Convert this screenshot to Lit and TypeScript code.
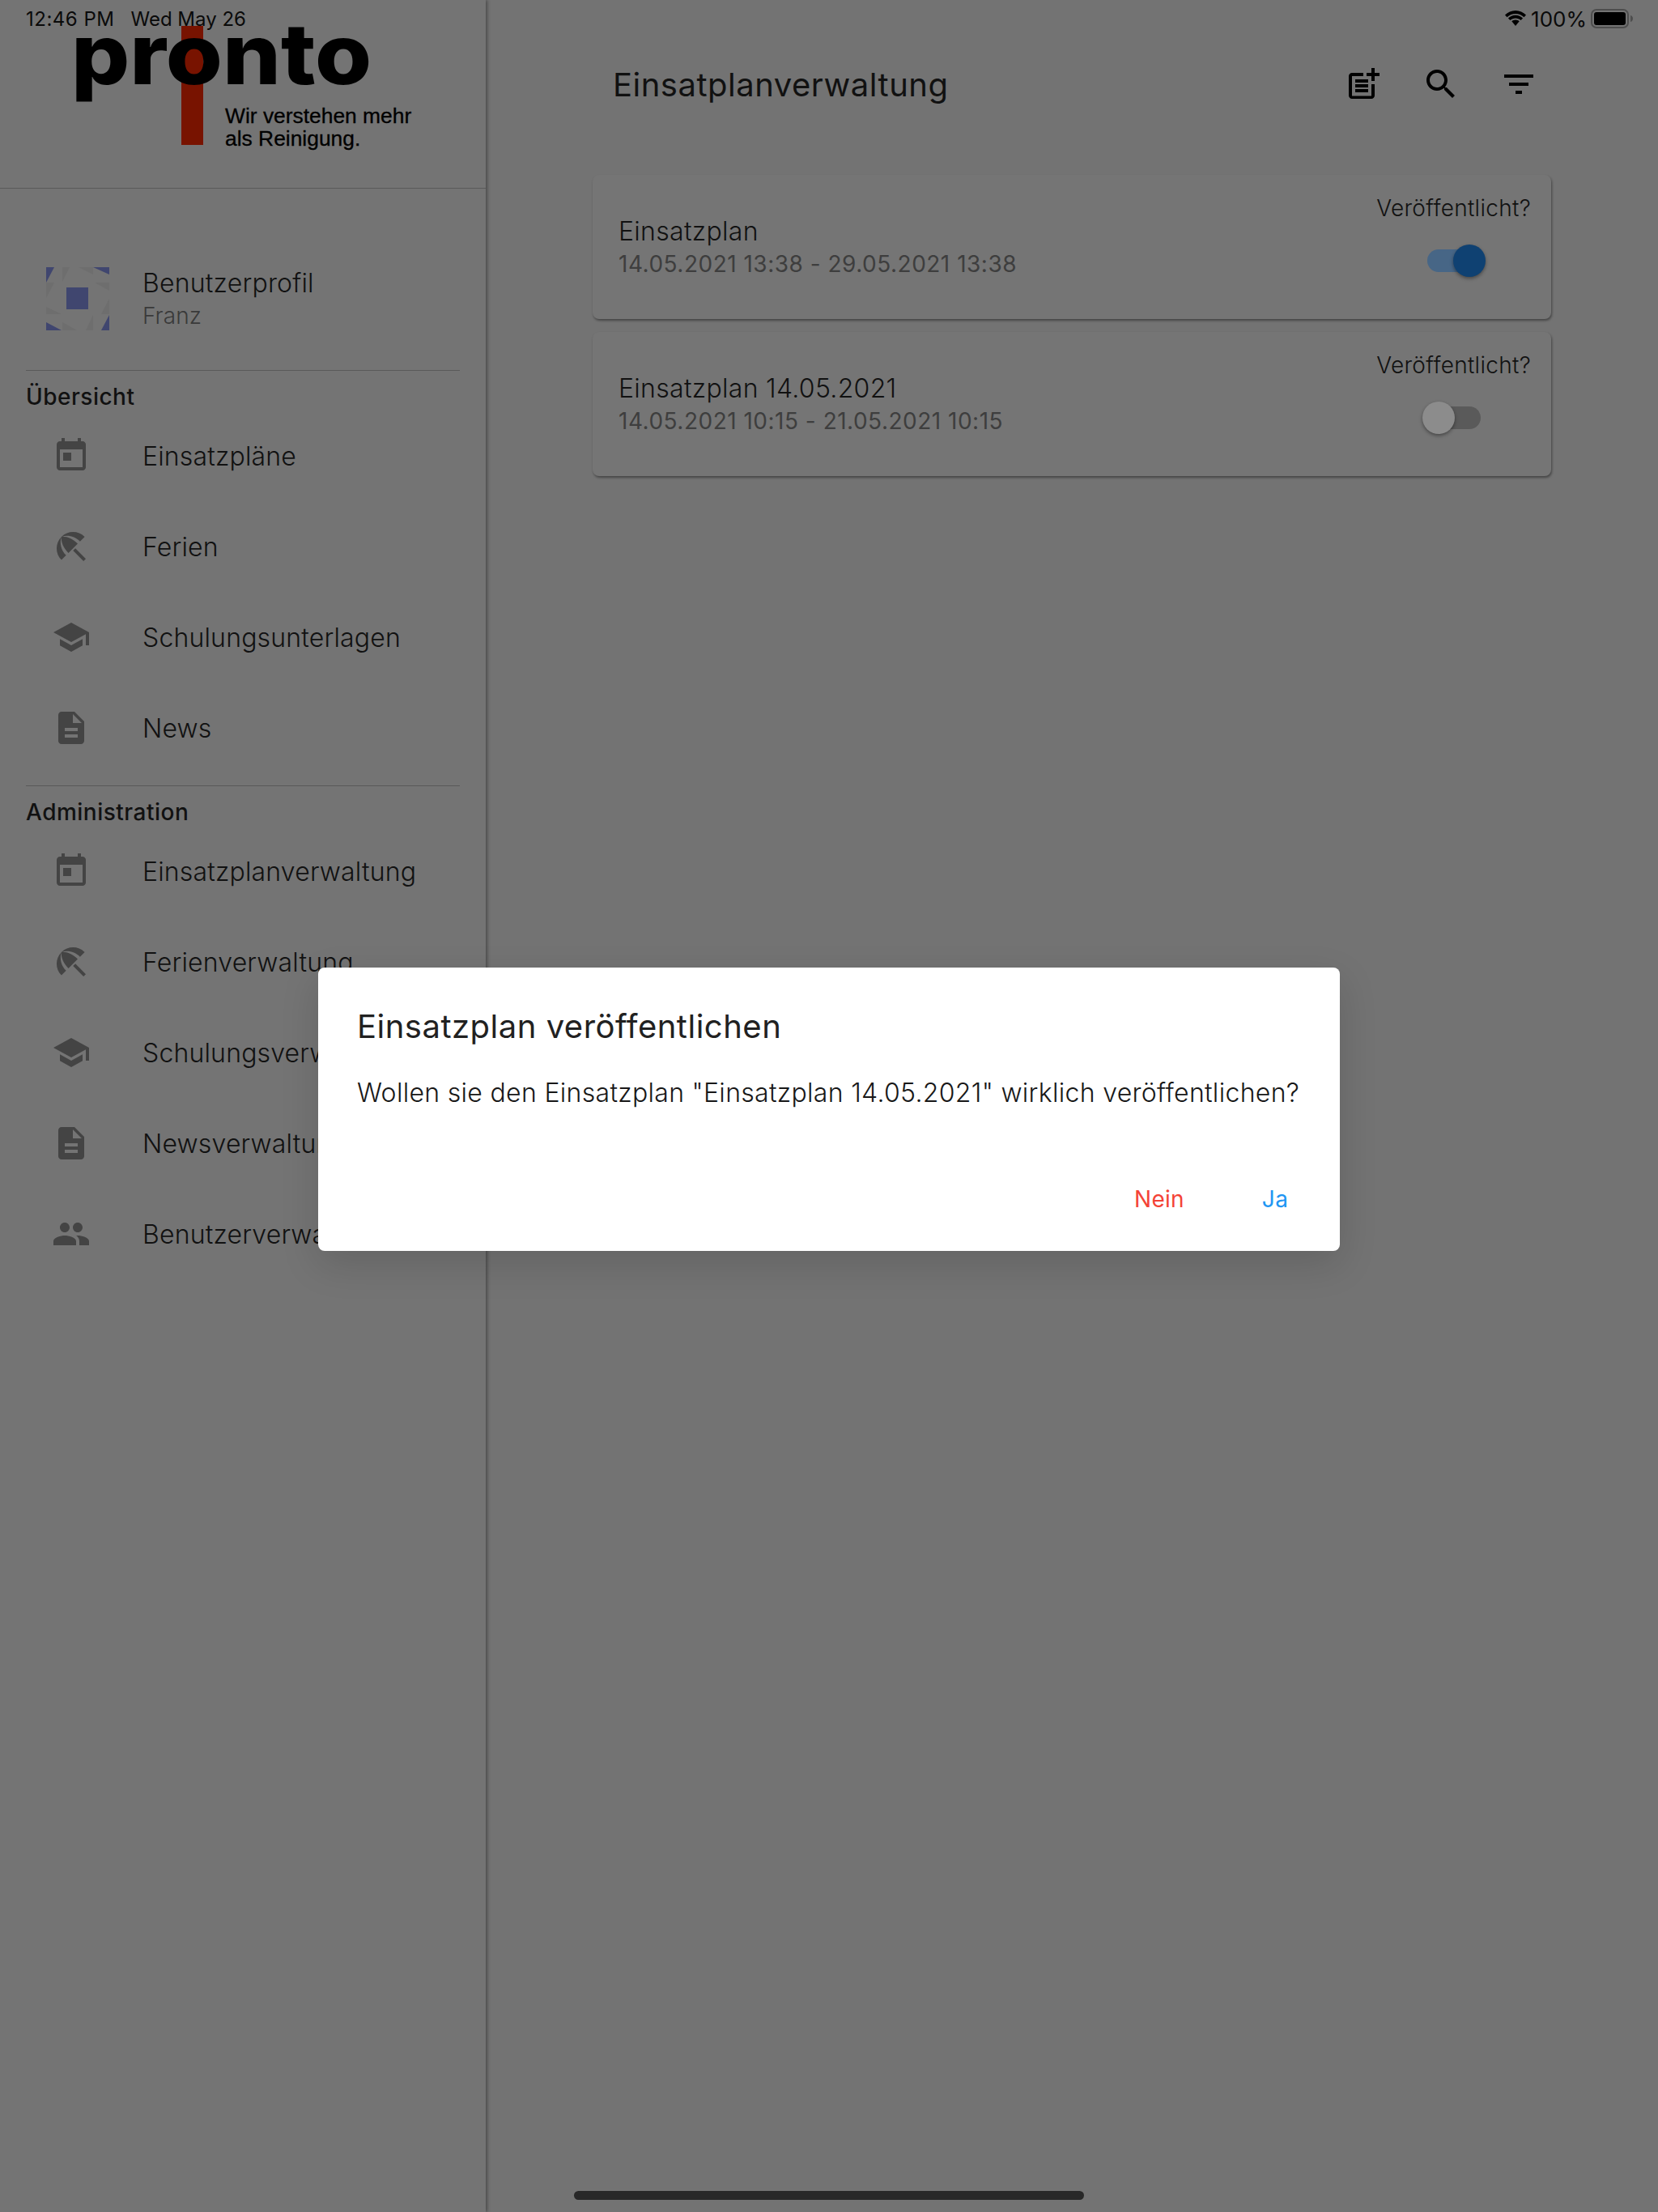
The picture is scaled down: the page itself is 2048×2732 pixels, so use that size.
import { LitElement, html, svg, css } from "lit";
import { customElement } from "lit/decorators.js";

const ICONS: Record<string, string> = {
  today:
    "M19 3h-1V1h-2v2H8V1H6v2H5c-1.11 0-1.99.9-1.99 2L3 19c0 1.1.89 2 2 2h14c1.1 0 2-.9 2-2V5c0-1.1-.9-2-2-2zm0 16H5V8h14v11zM7 10h5v5H7z",
  beach:
    "M13.127 14.56l1.43-1.43 6.44 6.443L19.57 21zm4.293-5.73l2.86-2.86c-3.95-3.95-10.35-3.96-14.3-.02 3.93-1.3 8.31-.25 11.44 2.88zM5.95 5.98c-3.94 3.95-3.93 10.35.02 14.3l2.86-2.86C5.7 14.29 4.65 9.91 5.95 5.98zm.02-.02l-.01.01c-.38 3.01 1.17 6.88 4.3 10.02l5.73-5.73c-3.13-3.13-7.01-4.68-10.02-4.3z",
  school: "M5 13.18v4L12 21l7-3.82v-4L12 17l-7-3.82zM12 3L1 9l11 6 9-4.91V17h2V9L12 3z",
  doc: "M14 2H6c-1.1 0-1.99.9-1.99 2L4 20c0 1.1.89 2 2 2h12c1.1 0 2-.9 2-2V8l-6-6zm2 16H8v-2h8v2zm0-4H8v-2h8v2zm-3-5V3.5L18.5 9H13z",
  people:
    "M16 11c1.66 0 2.99-1.34 2.99-3S17.66 5 16 5c-1.66 0-3 1.34-3 3s1.34 3 3 3zm-8 0c1.66 0 2.99-1.34 2.99-3S9.66 5 8 5C6.34 5 5 6.34 5 8s1.34 3 3 3zm0 2c-2.33 0-7 1.17-7 3.5V19h14v-2.5c0-2.33-4.67-3.5-7-3.5zm8 0c-.29 0-.62.02-.97.05 1.16.84 1.97 1.97 1.97 3.45V19h6v-2.5c0-2.33-4.67-3.5-7-3.5z",
  postAdd:
    "M17 19.22H5V7h7V5H5c-1.1 0-2 .9-2 2v12c0 1.1.9 2 2 2h12c1.1 0 2-.9 2-2v-7h-2v7.22zM19 2h-2v3h-3v2h3v3h2V7h3V5h-3V2zM7 9h8v2H7zM7 12v2h8v-2zM7 15h8v2H7z",
  search:
    "M15.5 14h-.79l-.28-.27C15.41 12.59 16 11.11 16 9.5 16 5.91 13.09 3 9.5 3S3 5.91 3 9.5 5.91 16 9.5 16c1.61 0 3.09-.59 4.23-1.57l.27.28v.79l5 4.99L20.49 19l-4.99-5zm-6 0C7.01 14 5 11.99 5 9.5S7.01 5 9.5 5 14 7.01 14 9.5 11.99 14 9.5 14z",
  filter: "M10 18h4v-2h-4v2zM3 6v2h18V6H3zm3 7h12v-2H6v2z",
};

const icon = (name: string) => html`<svg class="icon" viewBox="0 0 24 24" fill="currentColor"><path d=${ICONS[name]}></path></svg>`;

const overview = [
  ["today", "Einsatzpläne"],
  ["beach", "Ferien"],
  ["school", "Schulungsunterlagen"],
  ["doc", "News"],
];
const admin = [
  ["today", "Einsatzplanverwaltung"],
  ["beach", "Ferienverwaltung"],
  ["school", "Schulungsverwaltung"],
  ["doc", "Newsverwaltung"],
  ["people", "Benutzerverwaltung"],
];
const plans = [
  { title: "Einsatzplan", range: "14.05.2021 13:38 - 29.05.2021 13:38", on: true },
  { title: "Einsatzplan 14.05.2021", range: "14.05.2021 10:15 - 21.05.2021 10:15", on: false },
];

// identicon triangles, on a 78 unit square
const navyTris = ["0,0 10,0 0,19", "58,0 78,0 78,9", "78,59 78,78 68,78", "0,68 19,78 0,78"];
const grayTris = [
  "20,0 29,0 20,18",
  "40,0 58,0 58,9",
  "60,19 78,19 78,29",
  "78,39 78,58 68,58",
  "58,59 58,78 49,78",
  "20,68 38,78 20,78",
  "0,49 19,58 0,58",
  "0,19 10,19 0,38",
];

@customElement("app-root")
export class AppRoot extends LitElement {
  static styles = css`
    :host {
      display: block;
      position: relative;
      width: 2048px;
      height: 2732px;
      overflow: hidden;
      background: #737373;
      font-family: Inter, "Liberation Sans", sans-serif;
      color: #111;
    }
    .layout {
      display: flex;
      height: 100%;
    }
    .sidebar {
      width: 600px;
      flex: none;
      background: #747474;
      box-shadow: 2px 0 4px rgba(0, 0, 0, 0.35);
    }
    .logo-box {
      height: 232px;
      border-bottom: 1px solid #5a5a5a;
      position: relative;
    }
    .logo-bar {
      position: absolute;
      left: 224px;
      top: 32px;
      width: 27px;
      height: 147px;
      background: #781300;
    }
    .logo-word {
      position: absolute;
      left: 88px;
      top: 3px;
      font-size: 104px;
      line-height: 126px;
      font-weight: 800;
      color: #000;
      transform: scaleX(1.09);
      transform-origin: left center;
    }
    .logo-tag {
      position: absolute;
      left: 278px;
      top: 129px;
      font-family: "Liberation Sans", sans-serif;
      font-size: 26.4px;
      line-height: 28px;
      color: #000;
      -webkit-text-stroke: 0.3px #000;
    }
    .profile {
      display: flex;
      align-items: center;
      gap: 41px;
      padding: 95px 0 47px 57px;
    }
    .avatar {
      width: 78px;
      height: 78px;
      flex: none;
    }
    .profile-name {
      font-size: 32px;
      font-weight: 350;
      line-height: 40px;
      letter-spacing: 0.2px;
      margin-top: 2px;
    }
    .profile-sub {
      font-size: 28px;
      font-weight: 350;
      line-height: 40px;
      letter-spacing: 0.1px;
      color: #3a3a3a;
    }
    .section {
      border-top: 1px solid #5a5a5a;
      margin: 0 32px;
      padding-bottom: 15px;
    }
    .section-title {
      font-size: 28px;
      font-weight: 500;
      line-height: 34px;
      letter-spacing: 0.5px;
      padding: 15px 0 0;
    }
    .nav-item {
      display: flex;
      align-items: center;
      gap: 64px;
      height: 112px;
      padding-left: 32px;
      font-size: 32px;
      font-weight: 350;
      letter-spacing: 0.17px;
      color: #111;
      white-space: nowrap;
    }
    .nav-item .icon {
      color: #444;
    }
    .icon {
      width: 48px;
      height: 48px;
      flex: none;
      display: block;
    }
    .main {
      flex: 1;
      min-width: 0;
    }
    .appbar {
      display: flex;
      align-items: center;
      justify-content: space-between;
      height: 208px;
      padding: 0 124px 0 157px;
    }
    .page-title {
      font-size: 40px;
      letter-spacing: 0.5px;
    }
    .actions {
      display: flex;
      color: #000;
    }
    .action {
      width: 96px;
      display: flex;
      justify-content: center;
    }
    .cards {
      padding: 8px 132px 0;
    }
    .card {
      display: flex;
      justify-content: space-between;
      height: 178px;
      box-sizing: border-box;
      margin-bottom: 16px;
      padding: 0 25px 0 32px;
      background: #757575;
      border-radius: 8px;
      box-shadow: 1px 2px 3px rgba(0, 0, 0, 0.4);
    }
    .card-text {
      display: flex;
      flex-direction: column;
      justify-content: center;
      margin-top: 2px;
    }
    .card-title {
      font-size: 32px;
      font-weight: 350;
      line-height: 40px;
      letter-spacing: 0.3px;
    }
    .card-range {
      font-size: 28px;
      line-height: 40px;
      letter-spacing: 0.5px;
      color: #3e3e3e;
    }
    .card-side {
      display: flex;
      flex-direction: column;
      align-items: center;
      padding-top: 24px;
    }
    .card-label {
      font-size: 28px;
      font-weight: 350;
      line-height: 34px;
      letter-spacing: 0.3px;
    }
    .switch {
      position: relative;
      width: 66px;
      height: 28px;
      margin-top: 34px;
      border-radius: 14px;
      background: #5a5a5a;
    }
    .switch.on {
      background: #476686;
    }
    .thumb {
      position: absolute;
      top: -6px;
      left: -6px;
      width: 40px;
      height: 40px;
      border-radius: 50%;
      background: #8c8c8c;
      box-shadow: 0 2px 4px rgba(0, 0, 0, 0.4);
    }
    .switch.on .thumb {
      left: 32px;
      background: #0f4172;
    }
    .statusbar {
      position: absolute;
      left: 32px;
      right: 30px;
      top: 8px;
      height: 30px;
      display: flex;
      align-items: center;
      justify-content: space-between;
      font-size: 24px;
      color: #0a0a0a;
    }
    .status-left {
      display: flex;
      gap: 20px;
    }
    .status-time {
      letter-spacing: 0.5px;
    }
    .status-right {
      display: flex;
      align-items: center;
      gap: 5px;
    }
    .status-pct {
      font-size: 26px;
    }
    .battery {
      display: block;
    }
    .home-bar {
      position: absolute;
      left: 709px;
      bottom: 15px;
      width: 630px;
      height: 11px;
      border-radius: 6px;
      background: #282828;
    }
    .overlay {
      position: absolute;
      inset: 0;
      display: flex;
      align-items: center;
      justify-content: center;
      padding-top: 8px;
      box-sizing: border-box;
    }
    .dialog {
      width: 1262px;
      height: 350px;
      box-sizing: border-box;
      padding: 48px 0 0;
      background: #fff;
      border-radius: 8px;
      color: #212121;
      box-shadow: 0 16px 48px rgba(0, 0, 0, 0.14);
    }
    .dialog-title {
      font-size: 40px;
      line-height: 50px;
      letter-spacing: 0.5px;
      padding: 0 48px;
    }
    .dialog-text {
      font-size: 32px;
      font-weight: 350;
      line-height: 40px;
      letter-spacing: 0.31px;
      padding: 37px 0 0 48px;
      white-space: nowrap;
      color: #181818;
    }
    .dialog-actions {
      display: flex;
      justify-content: flex-end;
      gap: 15px;
      padding: 94px 16px 0;
    }
    .btn {
      min-width: 128px;
      text-align: center;
      font-size: 28px;
      line-height: 34px;
      letter-spacing: 0.3px;
    }
    .btn.no {
      color: #f44336;
    }
    .btn.yes {
      color: #2196f3;
    }
  `;

  private navSection(title: string, items: string[][]) {
    return html`<div class="section">
      <div class="section-title">${title}</div>
      ${items.map(([ic, label]) => html`<div class="nav-item">${icon(ic)}<span>${label}</span></div>`)}
    </div>`;
  }

  render() {
    return html`
      <div class="layout">
        <aside class="sidebar">
          <div class="logo-box">
            <div class="logo-bar"></div>
            <div class="logo-word">pronto</div>
            <div class="logo-tag">Wir verstehen mehr<br />als Reinigung.</div>
          </div>
          <div class="profile">
            <svg class="avatar" viewBox="0 0 78 78">
              ${grayTris.map((p) => svg`<polygon points=${p} fill="#6e6e6e"></polygon>`)}
              ${navyTris.map((p) => svg`<polygon points=${p} fill="#40466f"></polygon>`)}
              <rect x="25" y="25" width="27" height="27" fill="#40466f"></rect>
            </svg>
            <div>
              <div class="profile-name">Benutzerprofil</div>
              <div class="profile-sub">Franz</div>
            </div>
          </div>
          ${this.navSection("Übersicht", overview)} ${this.navSection("Administration", admin)}
        </aside>
        <main class="main">
          <div class="appbar">
            <div class="page-title">Einsatplanverwaltung</div>
            <div class="actions">
              <div class="action">${icon("postAdd")}</div>
              <div class="action">${icon("search")}</div>
              <div class="action">${icon("filter")}</div>
            </div>
          </div>
          <div class="cards">
            ${plans.map(
              (p) => html`<div class="card">
                <div class="card-text">
                  <div class="card-title">${p.title}</div>
                  <div class="card-range">${p.range}</div>
                </div>
                <div class="card-side">
                  <div class="card-label">Veröffentlicht?</div>
                  <div class="switch ${p.on ? "on" : ""}"><div class="thumb"></div></div>
                </div>
              </div>`
            )}
          </div>
        </main>
      </div>

      <div class="statusbar">
        <div class="status-left"><span class="status-time">12:46 PM</span><span>Wed May 26</span></div>
        <div class="status-right">
          <svg width="28" height="20" viewBox="0 0 28 20" fill="#000">
            <path d="M14 4c4 0 7.500 1.500 10.500 4.200L27 5.600C23.500 2.200 19 0 14 0S4.500 2.200 1 5.600l2.500 2.600C6.500 5.500 10 4 14 4z"></path>
            <path d="M14 9.500c2.500 0 4.800 1 6.600 2.600l2.500-2.600C20.700 7.200 17.500 5.800 14 5.800S7.300 7.200 4.900 9.500l2.500 2.600C9.200 10.500 11.500 9.500 14 9.500z"></path>
            <path d="M14 11.500c-1.800 0-3.400.7-4.700 1.800L14 19l4.700-5.700c-1.300-1.100-2.900-1.800-4.700-1.800z"></path>
          </svg>
          <span class="status-pct">100%</span>
          <svg class="battery" width="53" height="24" viewBox="0 0 53 24">
            <rect x="1" y="1" width="45" height="22" rx="6" fill="none" stroke="#4e4e4e" stroke-width="2"></rect>
            <rect x="4" y="4" width="39" height="16" rx="3" fill="#000"></rect>
            <path d="M49 8c2 .5 3 2 3 4s-1 3.500-3 4z" fill="#4e4e4e"></path>
          </svg>
        </div>
      </div>

      <div class="home-bar"></div>

      <div class="overlay">
        <div class="dialog">
          <div class="dialog-title">Einsatzplan veröffentlichen</div>
          <div class="dialog-text">Wollen sie den Einsatzplan "Einsatzplan 14.05.2021" wirklich veröffentlichen?</div>
          <div class="dialog-actions">
            <div class="btn no">Nein</div>
            <div class="btn yes">Ja</div>
          </div>
        </div>
      </div>
    `;
  }
}
